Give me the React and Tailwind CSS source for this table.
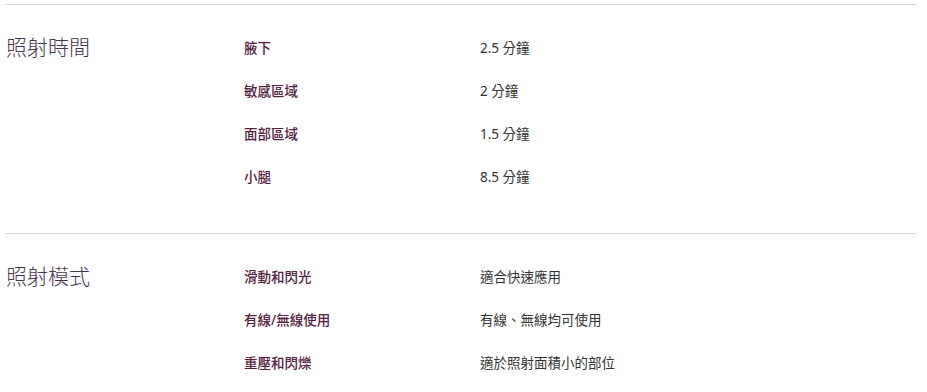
import React from "react";

const sections = [
  {
    title: "照射時間",
    rows: [
      ["腋下", "2.5 分鐘"],
      ["敏感區域", "2 分鐘"],
      ["面部區域", "1.5 分鐘"],
      ["小腿", "8.5 分鐘"],
    ],
  },
  {
    title: "照射模式",
    rows: [
      ["滑動和閃光", "適合快速應用"],
      ["有線/無線使用", "有線、無線均可使用"],
      ["重壓和閃爍", "適於照射面積小的部位"],
    ],
  },
];

const font = {
  fontFamily: '"Noto Sans", "Noto Sans CJK TC", sans-serif',
};

export default function App() {
  return (
    <div className="w-[927px] h-[392px] bg-white overflow-hidden pt-1 px-[5px]" style={font}>
      <div className="w-[911px]">
        {sections.map((s) => (
          <div key={s.title} className="border-t border-[#d9d9d9] flex pt-[22px] pb-[34px]">
            <div className="w-[239px] h-[43px] flex items-center pl-px pb-[3px] text-[21px] font-light text-[#4a3350] leading-none">
              {s.title}
            </div>
            <div className="flex-1">
              {s.rows.map(([label, value]) => (
                <div key={label} className="flex h-[43px] items-center text-[13.5px] leading-none">
                  <div className="w-[236px] font-medium text-[#55213f]">{label}</div>
                  <div className="text-[#333333]">{value}</div>
                </div>
              ))}
            </div>
          </div>
        ))}
      </div>
    </div>
  );
}
